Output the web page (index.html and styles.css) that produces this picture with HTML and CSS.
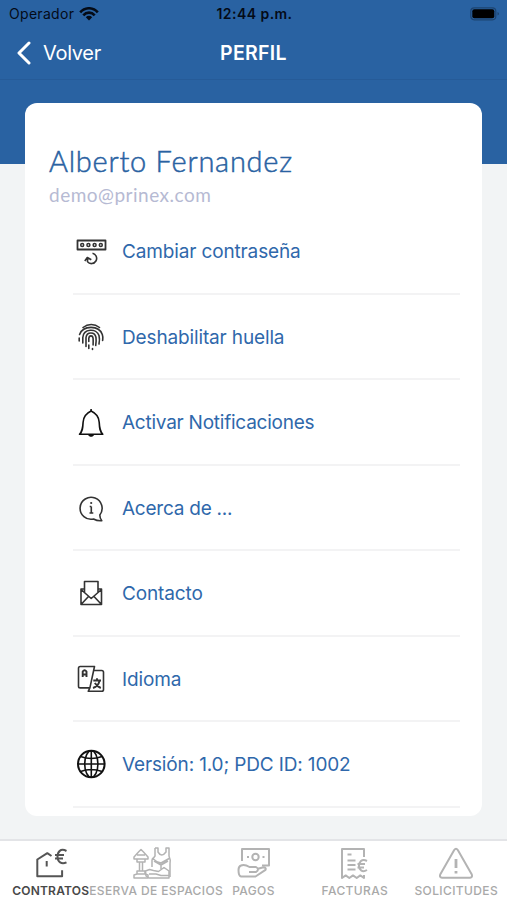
FILE: index.html
```html
<!DOCTYPE html>
<html lang="es">
<head>
<meta charset="utf-8">
<title>Perfil</title>
<link rel="stylesheet" href="styles.css">
</head>
<body>
<div class="screen">
  <header class="top">
    <div class="status">
      <div class="carrier"><span>Operador</span>
        <svg width="20" height="14" viewBox="0 0 20 14" fill="none" stroke="#040b17" stroke-width="2.6"><path d="M1.2 5.4C6-.1 14-.1 18.800 5.400M4.300 8.300c3.200-3.600 8.200-3.600 11.400 0"/><path d="M10 13.400 6.800 10.200c1.800-1.800 4.600-1.800 6.400 0z" fill="#040b17" stroke="none"/></svg>
      </div>
      <strong class="time">12:44 p.m.</strong>
      <svg class="battery" width="30" height="14" viewBox="0 0 30 14"><rect x=".8" y=".8" width="25" height="12" rx="3.500" fill="none" stroke="#1d4470" stroke-width="1.200"/><rect x="2.300" y="2.300" width="22" height="9" rx="2" fill="#000"/><path d="M27.500 5v3.500q1.500-.5 1.500-1.750T27.500 5z" fill="#1d4470"/></svg>
    </div>
    <nav class="nav">
      <a class="back"><svg width="16" height="24" viewBox="0 0 16 24" fill="none" stroke="#fff" stroke-width="3" stroke-linecap="round" stroke-linejoin="round"><path d="M13 2 3 12l10 10"/></svg><span>Volver</span></a>
      <h1>PERFIL</h1>
      <span></span>
    </nav>
  </header>

  <main class="card">
    <section class="person">
      <h2>Alberto Fernandez</h2>
      <p>demo@prinex.com</p>
    </section>
    <ul class="menu">
      <li><svg class="icon" viewBox="0 0 32 32"><path d="M2.500 5.500h28v9h-28z" stroke-width="1.800"/><g stroke-width="1.500"><circle cx="7.200" cy="10" r="1.500"/><circle cx="13.400" cy="10" r="1.500"/><circle cx="19.600" cy="10" r="1.500"/><circle cx="25.800" cy="10" r="1.500"/></g><path d="M17.500 18.300a5.200 5.200 0 1 1-5 8.500M12.500 27v-4M9.800 26l2.500-3.500 4 2.300"/></svg><span>Cambiar contraseña</span></li>
      <li><svg class="icon" viewBox="0 0 32 32"><g stroke-linecap="round"><path d="M8 6.500c5-4 11.500-4 16.500 0M4.600 13.500C8 4 24 4 27.300 13.500c1 3 .6 4 .3 6M4.200 17v3M7.800 22v-5.500c.7-9 13.700-9.500 16.200-2 .8 3 .6 5.500 0 8.500M11 25.500v-9c.7-6 9-6 10 0 .4 3 .1 5.500-.3 8M13.800 24v3.500M13.800 20.500v-3c.3-3.500 4-3.500 4.300 0 .2 3 0 5 0 6.500M17.500 27.500v1"/></g></svg><span>Deshabilitar huella</span></li>
      <li class="tight"><svg class="icon" viewBox="0 0 32 32"><path d="M4.500 28.300h23.300c-3-3-3.300-6-3.600-12-.3-6-3-9-8.100-11.300-5 2.300-7.700 5.300-8 11.300-.3 6-.6 9-3.600 12z" stroke="#111"/><path d="M13.200 29h5.800c-.8 2.400-5 2.400-5.800 0z" fill="#111" stroke="none"/><path d="M16.100 5V3" stroke="#111"/></svg><span>Activar Notificaciones</span></li>
      <li class="tight"><svg class="icon" viewBox="0 0 32 32"><path d="M24.800 23A11 11 0 1 0 18.500 27c2.500 1.400 5 1.900 8.300 1.700-1.500-1.700-2-3.500-2-5.700z"/><path d="M16.300 14.500V21M14.700 14.500h1.600M14.500 21h3.800"/><circle cx="16.200" cy="11" r="1.100" fill="#333" stroke="none"/></svg><span>Acerca de ...</span></li>
      <li><svg class="icon" viewBox="0 0 32 32"><path d="M9.500 12H6v15.500h20.500V12H23M9.500 15.500V4.500H23v11M6 12.500l10.200 9 10.300-9M6 27.500l7.500-8M26.500 27.500l-7.500-8"/></svg><span>Contacto</span></li>
      <li><svg class="icon" viewBox="0 0 32 32"><path d="M19.500 3.500H5.200q-1.700 0-1.700 1.700v18q0 1.700 1.700 1.700h9.700zM19.100 7.500h7.600q1.800 0 1.800 1.800v17.200q0 1.800-1.800 1.800H13.200l1.700-3.400"/><path d="M7.700 14V8.500q1.900-2.500 3.800 0V14M7.700 11.500h3.800M18.300 17.500H26M22 15.200v2.300M24.500 18c-.7 3-3.400 6-6.500 7M19.800 20c1.700 2.500 3.600 4 6 5" stroke-width="1.900"/></svg><span>Idioma</span></li>
      <li><svg class="icon" viewBox="0 0 32 32"><g stroke="#111"><circle cx="16.300" cy="16" r="13.300" stroke-width="2"/><ellipse cx="16.300" cy="16" rx="6.600" ry="13.300"/><path d="M16.300 2.700v26.600M3 16h26.600M5.500 8.500q10.800 4 21.600 0M5.500 23.500q10.800-4 21.600 0"/></g></svg><span>Versión: 1.0; PDC ID: 1002</span></li>
    </ul>
  </main>

  <footer class="tabs">
    <a class="tab active"><svg viewBox="0 0 40 36"><path d="M20.500 11l-4.200-2.800L6.300 14.500v16.800h24.800v-6M15.700 16v5.500"/><path d="M35.500 6c-6-3.300-9 1-9 5.800 0 5 4 8 9 5.500M24 10h9M24 13.500h8"/></svg><span>CONTRATOS</span></a>
    <a class="tab"><svg viewBox="0 0 40 36"><g stroke-width="1.500"><path d="M2 12l4.500-5L9 4.500 11.500 7l4.500 5v2H2zM5 14v3h8v-3M7.500 17v9M10.500 17v9M5 26h8v3l3 1v3H2v-3l3-1zM5 29h8M5 10h8"/><path d="M23 3v8l-3 4v7M23 3h3v4q3.500 6 8 0V3h3v8q2 4 1 8v13M20 13q4 4 9 5l9-5M22 16l7 4 7-4M29 20v4"/><path d="M13.500 26l4-1.500 4 1 5 1 5.500-4 5 3.500v7H17l-3-2zM17 29h7l5 1.500h8"/></g></svg><span>RESERVA DE ESPACIOS</span></a>
    <a class="tab"><svg viewBox="0 0 40 36"><path d="M9 16V4h27v16.500h-7"/><circle cx="22.500" cy="12" r="3.200"/><path d="M14 12h2M29.500 12h2M16 27h7q4-2.700 0-5h-6.500q-5-3-8.500-1.500-2.500 1-2.500 4.500 0 6 2.500 6.500h14.500l10-6.700q1-2.300-2-2.500l-5.500 1.500"/></svg><span>PAGOS</span></a>
    <a class="tab"><svg viewBox="0 0 40 36"><path d="M29 12V4H7v29l3.700-2.600 3.600 2.600 3.700-2.600 3.700 2.600 3.600-2.600L29 33v-3M12.500 9.500h4M12.500 15.500h8M12.500 20h8M12.500 24.500h8"/><path d="M32 16c-5.500-3-8 1.500-8 5s3 7 8 4M22.500 19h7.500M22.500 22.500H29"/></svg><span>FACTURAS</span></a>
    <a class="tab"><svg viewBox="0 0 40 36"><path d="M18.200 5q1.800-2.500 3.600 0l14 24.500q1 3-1.800 3.300H6q-2.800-.3-1.800-3.300z"/><path d="M20 14v9M20 26v2.500" stroke-width="2.800"/></svg><span>SOLICITUDES</span></a>
  </footer>
</div>
</body>
</html>
```

FILE: styles.css
```css
* { box-sizing: border-box; }
body { margin: 0; font-family: Inter, "Liberation Sans", sans-serif; }
h1, h2, p, ul { margin: 0; padding: 0; }
svg { display: block; flex: none; }

.screen {
  height: 900px;
  display: flex;
  flex-direction: column;
  overflow: hidden;
  background: #f2f4f5;
}

.top { height: 164px; flex: none; background: #2962a2; }
.status {
  height: 27px;
  padding: 0 7px 0 9px;
  display: grid;
  grid-template-columns: 1fr auto 1fr;
  align-items: center;
  color: #040b17;
}
.carrier { display: flex; align-items: center; gap: 5px; font-size: 14px; letter-spacing: .3px; }
.time { font-size: 14px; font-weight: 600; letter-spacing: .45px; }
.battery { justify-self: end; }
.nav {
  height: 53px;
  padding: 0 16px 1px;
  border-bottom: 1px solid #265b98;
  display: grid;
  grid-template-columns: 1fr auto 1fr;
  align-items: center;
  color: #fff;
}
.back { display: flex; align-items: center; gap: 11px; font-size: 20px; letter-spacing: -.3px; }
.nav h1 { font-size: 19.5px; font-weight: 600; letter-spacing: .3px; }

.card {
  height: 713px;
  flex: none;
  margin: -61px 25px 0;
  padding: 38px 22px 0 24px;
  border-radius: 12px;
  background: #fff;
  overflow: hidden;
}
.person { height: 68px; font-family: Lato, sans-serif; }
.person h2 { font-size: 29px; line-height: 39px; font-weight: 300; color: #2962a2; letter-spacing: .75px; -webkit-text-stroke: .5px #2962a2; }
.person p { font-size: 19px; line-height: 30px; color: #b6bad3; letter-spacing: .5px; }
.menu { list-style: none; margin-left: 24px; }
.menu li {
  height: 85.5px;
  display: flex;
  align-items: center;
  gap: 15px;
  padding: 2px 0 0 2px;
  border-bottom: 2px solid #f3f3f4;
  font-size: 19px;
  letter-spacing: -.14px;
  color: #2f68ab;
}
.menu .tight { letter-spacing: -.24px; }
.icon { width: 32px; height: 32px; margin-top: -1px; fill: none; stroke: #333; stroke-width: 1.6; stroke-linejoin: round; }

.tabs {
  height: 61px;
  margin-top: auto;
  flex: none;
  display: grid;
  grid-template-columns: repeat(5, 1fr);
  border-top: 2px solid #e3e4e7;
  background: #fff;
}
.tab {
  min-width: 0;
  display: flex;
  flex-direction: column;
  align-items: center;
  padding-top: 4px;
  color: #a9a9a9;
  font-size: 12px;
  font-weight: 500;
  letter-spacing: .38px;
}
.tab svg { width: 40px; height: 36px; fill: none; stroke: #b3b3b3; stroke-width: 2; stroke-linejoin: round; }
.tab span { line-height: 14px; margin-top: 3px; white-space: nowrap; }
.active { position: relative; z-index: 1; color: #484848; }
.active svg { stroke: #555; }
.active span { background: #fff; font-weight: 600; letter-spacing: .2px; }
```
